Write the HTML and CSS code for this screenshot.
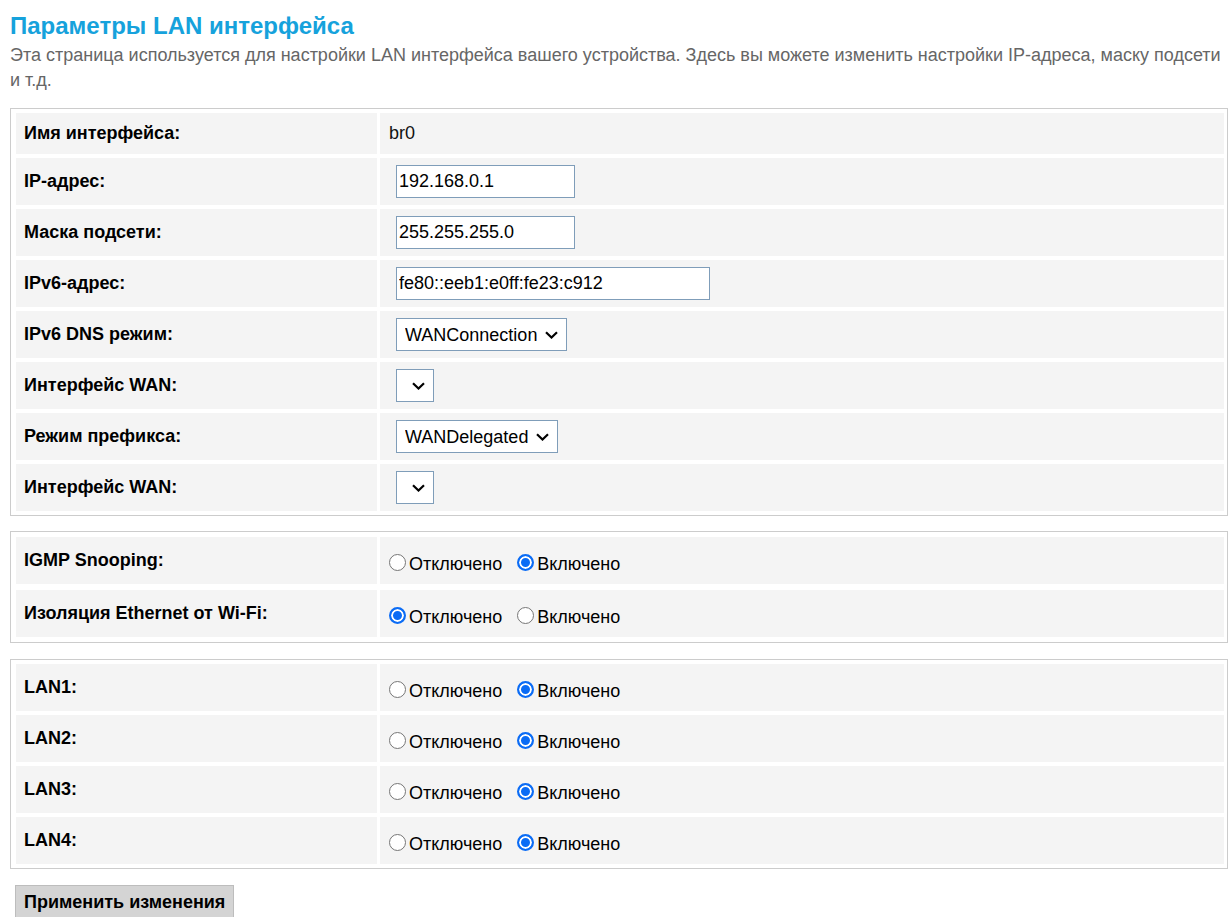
FILE: index.html
```html
<!DOCTYPE html>
<html lang="ru">
<head>
<meta charset="utf-8">
<title>Параметры LAN интерфейса</title>
<link rel="stylesheet" href="styles.css">
</head>
<body>
<div class="page">
  <h1 class="title">Параметры LAN интерфейса</h1>
  <p class="desc">Эта страница используется для настройки LAN интерфейса вашего устройства. Здесь вы можете изменить настройки IP-адреса, маску подсети и т.д.</p>

  <div class="box box-main">
    <div class="lbl">Имя интерфейса:</div>
    <div class="val">br0</div>

    <div class="lbl">IP-адрес:</div>
    <div class="val"><input class="txt" type="text" value="192.168.0.1"></div>

    <div class="lbl">Маска подсети:</div>
    <div class="val"><input class="txt" type="text" value="255.255.255.0"></div>

    <div class="lbl">IPv6-адрес:</div>
    <div class="val"><input class="txt txt-wide" type="text" value="fe80::eeb1:e0ff:fe23:c912"></div>

    <div class="lbl">IPv6 DNS режим:</div>
    <div class="val"><span class="selwrap"><select class="sel sel-conn"><option>WANConnection</option></select><svg class="chev" width="13" height="8" viewBox="0 0 13 8"><path d="M1 1.2 L6.5 6.5 L12 1.2" fill="none" stroke="#000" stroke-width="2.2"/></svg></span></div>

    <div class="lbl">Интерфейс WAN:</div>
    <div class="val"><span class="selwrap"><select class="sel sel-empty"><option></option></select><svg class="chev" width="13" height="8" viewBox="0 0 13 8"><path d="M1 1.2 L6.5 6.5 L12 1.2" fill="none" stroke="#000" stroke-width="2.2"/></svg></span></div>

    <div class="lbl">Режим префикса:</div>
    <div class="val"><span class="selwrap"><select class="sel sel-deleg"><option>WANDelegated</option></select><svg class="chev" width="13" height="8" viewBox="0 0 13 8"><path d="M1 1.2 L6.5 6.5 L12 1.2" fill="none" stroke="#000" stroke-width="2.2"/></svg></span></div>

    <div class="lbl">Интерфейс WAN:</div>
    <div class="val"><span class="selwrap"><select class="sel sel-empty"><option></option></select><svg class="chev" width="13" height="8" viewBox="0 0 13 8"><path d="M1 1.2 L6.5 6.5 L12 1.2" fill="none" stroke="#000" stroke-width="2.2"/></svg></span></div>
  </div>

  <div class="box box-opts">
    <div class="lbl">IGMP Snooping:</div>
    <div class="val val-radio"><input class="rad" type="radio" name="igmp">Отключено<input class="rad rad-2" type="radio" name="igmp" checked>Включено</div>

    <div class="lbl">Изоляция Ethernet от Wi-Fi:</div>
    <div class="val val-radio"><input class="rad" type="radio" name="iso" checked>Отключено<input class="rad rad-2" type="radio" name="iso">Включено</div>
  </div>

  <div class="box box-lan">
    <div class="lbl">LAN1:</div>
    <div class="val val-radio"><input class="rad" type="radio" name="lan1">Отключено<input class="rad rad-2" type="radio" name="lan1" checked>Включено</div>

    <div class="lbl">LAN2:</div>
    <div class="val val-radio"><input class="rad" type="radio" name="lan2">Отключено<input class="rad rad-2" type="radio" name="lan2" checked>Включено</div>

    <div class="lbl">LAN3:</div>
    <div class="val val-radio"><input class="rad" type="radio" name="lan3">Отключено<input class="rad rad-2" type="radio" name="lan3" checked>Включено</div>

    <div class="lbl">LAN4:</div>
    <div class="val val-radio"><input class="rad" type="radio" name="lan4">Отключено<input class="rad rad-2" type="radio" name="lan4" checked>Включено</div>
  </div>

  <button class="apply" type="button">Применить изменения</button>
</div>
</body>
</html>
```

FILE: styles.css
```css
html, body {
  margin: 0;
  padding: 0;
  background: #ffffff;
}

body {
  font-family: "Liberation Sans", Arial, sans-serif;
  font-size: 18px;
  color: #000000;
}

.page {
  padding: 12px 0 0 10px;
}

.title {
  margin: 0;
  font-size: 24px;
  font-weight: bold;
  line-height: 28px;
  color: #16a2dc;
}

.desc {
  margin: 3px 0 0 0;
  font-size: 18px;
  line-height: 25px;
  color: #666666;
}

.box {
  display: grid;
  grid-template-columns: 361px 1fr;
  column-gap: 3px;
  border: 1px solid #cccccc;
  margin-bottom: 16px;
}

.box-main {
  margin-top: 15px;
  padding: 4px 3px 4px 5px;
  row-gap: 4px;
  grid-template-rows: 41px repeat(7, 47px);
  margin-bottom: 15px;
}

.box-opts {
  padding: 5px 3px 5px 5px;
  row-gap: 6px;
  grid-auto-rows: 47px;
}

.box-lan {
  padding: 4px 3px 4px 5px;
  row-gap: 4px;
  grid-auto-rows: 47px;
}

.lbl {
  display: flex;
  align-items: center;
  background: #f4f4f4;
  padding-left: 8px;
  font-weight: bold;
  color: #000000;
}

.val {
  display: flex;
  align-items: center;
  background: #f4f4f4;
  padding-left: 9px;
  color: #111111;
}

.val-radio {
  display: block;
  line-height: 47px;
  padding-top: 4px;
  box-sizing: border-box;
  color: #000000;
}

.txt {
  box-sizing: border-box;
  width: 179px;
  height: 33px;
  margin: 0 0 0 7px;
  padding: 0 2px;
  border: 1px solid #7f9db9;
  border-radius: 0;
  background: #ffffff;
  font-family: "Liberation Sans", Arial, sans-serif;
  font-size: 18px;
  color: #000000;
}

.txt-wide {
  width: 314px;
}

.selwrap {
  position: relative;
  display: inline-block;
  margin-left: 7px;
  height: 33px;
}

.sel {
  -webkit-appearance: none;
  appearance: none;
  box-sizing: border-box;
  height: 33px;
  margin: 0;
  padding: 0 0 0 8px;
  border: 1px solid #7f9db9;
  border-radius: 0;
  background-color: #ffffff;
  font-family: "Liberation Sans", Arial, sans-serif;
  font-size: 18px;
  color: #000000;
}

.chev {
  position: absolute;
  right: 9px;
  top: 13px;
  pointer-events: none;
}

.sel-conn {
  width: 171px;
}

.sel-deleg {
  width: 162px;
}

.sel-empty {
  width: 38px;
}

.rad {
  -webkit-appearance: none;
  appearance: none;
  box-sizing: border-box;
  width: 17px;
  height: 17px;
  margin: 0 3px 0 0;
  border: 1px solid #767676;
  border-radius: 50%;
  background: #ffffff;
  vertical-align: -1px;
}

.rad:checked {
  border: 2px solid #0b6cf5;
  background: #0b6cf5;
  box-shadow: inset 0 0 0 2px #ffffff;
}

.rad-2 {
  margin-left: 15px;
}

.apply {
  box-sizing: border-box;
  height: 34px;
  margin-left: 5px;
  padding: 0 8px;
  border: 1px solid #bdbdbd;
  border-radius: 0;
  background: #d4d4d4;
  font-family: "Liberation Sans", Arial, sans-serif;
  font-size: 18px;
  font-weight: bold;
  color: #000000;
}
```
